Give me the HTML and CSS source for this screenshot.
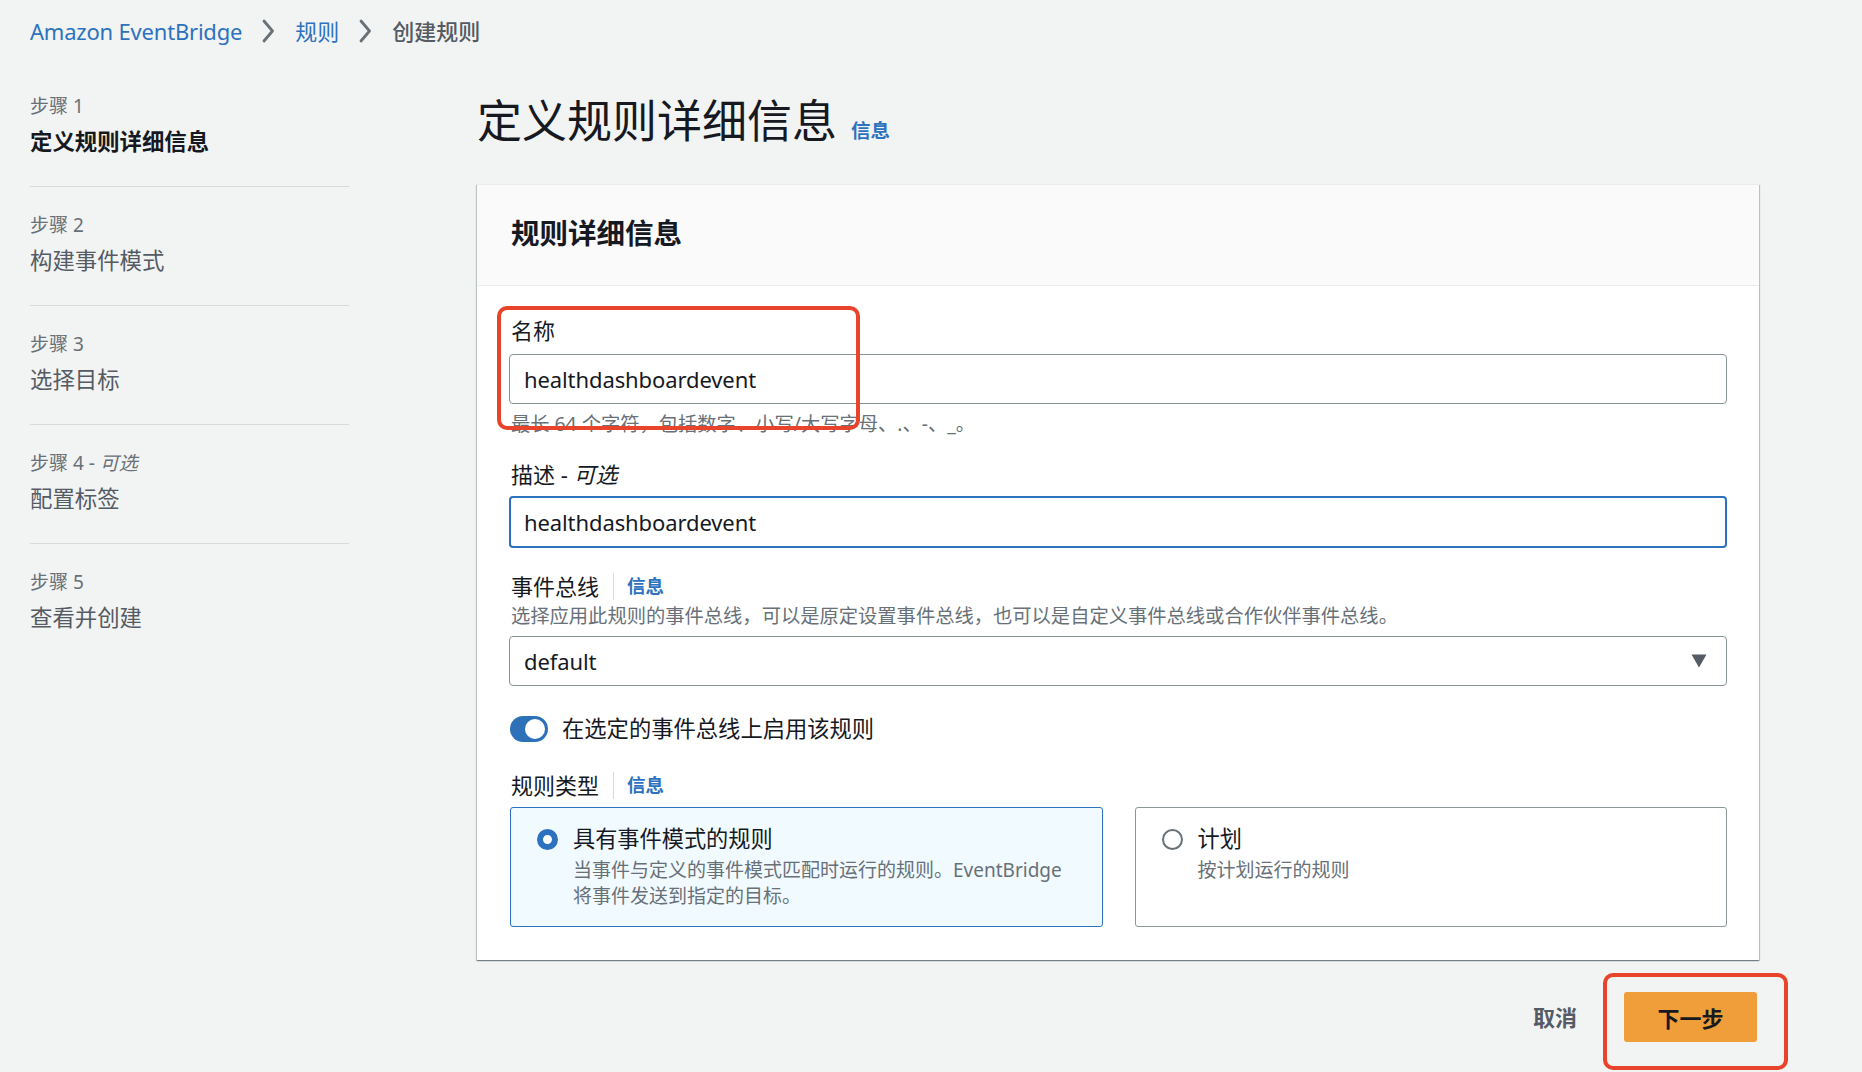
FILE: index.html
```html
<!DOCTYPE html>
<html lang="zh-CN">
<head>
<meta charset="utf-8">
<title>创建规则 - Amazon EventBridge</title>
<link rel="stylesheet" href="styles.css">
</head>
<body>
<nav class="crumbs">
  <a class="crumb-link">Amazon EventBridge</a>
  <svg class="chev" width="14" height="26" viewBox="0 0 14 26"><path d="M3 3l8.5 10L3 23" fill="none" stroke="#687078" stroke-width="2.8" stroke-linecap="round" stroke-linejoin="round"/></svg>
  <a class="crumb-link">规则</a>
  <svg class="chev" width="14" height="26" viewBox="0 0 14 26"><path d="M3 3l8.5 10L3 23" fill="none" stroke="#687078" stroke-width="2.8" stroke-linecap="round" stroke-linejoin="round"/></svg>
  <span class="crumb-current">创建规则</span>
</nav>

<div class="layout">
  <aside class="steps">
    <div class="step step-active">
      <div class="step-num">步骤 1</div>
      <div class="step-title">定义规则详细信息</div>
    </div>
    <div class="step">
      <div class="step-num">步骤 2</div>
      <div class="step-title">构建事件模式</div>
    </div>
    <div class="step">
      <div class="step-num">步骤 3</div>
      <div class="step-title">选择目标</div>
    </div>
    <div class="step">
      <div class="step-num">步骤 4 - <i>可选</i></div>
      <div class="step-title">配置标签</div>
    </div>
    <div class="step">
      <div class="step-num">步骤 5</div>
      <div class="step-title">查看并创建</div>
    </div>
  </aside>

  <main class="main">
    <header class="page-head">
      <h1 class="page-title">定义规则详细信息</h1>
      <a class="info info-head">信息</a>
    </header>

    <section class="card">
      <div class="card-head">
        <h2 class="card-title">规则详细信息</h2>
      </div>
      <div class="card-body">
        <div class="field field-name">
          <div class="label">名称</div>
          <div class="input">healthdashboardevent</div>
          <div class="hint">最长 64 个字符，包括数字、小写/大写字母、.、-、_。</div>
          <div class="annot annot-name"></div>
        </div>

        <div class="field field-desc">
          <div class="label">描述 - <i>可选</i></div>
          <div class="input input-focus">healthdashboardevent</div>
        </div>

        <div class="field field-bus">
          <div class="label label-info"><span class="label-text">事件总线</span><a class="info">信息</a></div>
          <div class="desc">选择应用此规则的事件总线，可以是原定设置事件总线，也可以是自定义事件总线或合作伙伴事件总线。</div>
          <div class="input select">
            <span>default</span>
            <svg class="caret" width="16" height="14" viewBox="0 0 16 14"><path d="M0.5 0.5h15L8 13.5z" fill="#545b64"/></svg>
          </div>
        </div>

        <div class="toggle-row">
          <span class="toggle"><span class="knob"></span></span>
          <span class="toggle-label">在选定的事件总线上启用该规则</span>
        </div>

        <div class="field field-type">
          <div class="label label-info"><span class="label-text">规则类型</span><a class="info">信息</a></div>
          <div class="tiles">
            <div class="tile tile-selected">
              <span class="radio radio-on"></span>
              <div class="tile-text">
                <div class="tile-title">具有事件模式的规则</div>
                <div class="tile-desc">当事件与定义的事件模式匹配时运行的规则。EventBridge<br>将事件发送到指定的目标。</div>
              </div>
            </div>
            <div class="tile">
              <span class="radio"></span>
              <div class="tile-text">
                <div class="tile-title">计划</div>
                <div class="tile-desc">按计划运行的规则</div>
              </div>
            </div>
          </div>
        </div>
      </div>
    </section>

    <footer class="actions">
      <a class="btn-link">取消</a>
      <div class="primary-wrap">
        <button class="btn-primary">下一步</button>
        <div class="annot annot-btn"></div>
      </div>
    </footer>
  </main>
</div>
</body>
</html>
```

FILE: styles.css
```css
* { box-sizing: border-box; }

html, body {
  margin: 0;
  padding: 0;
}

body {
  background: #f2f3f3;
  color: #16191f;
  font-family: "Noto Sans", "Noto Sans CJK SC", sans-serif;
  font-size: 22px;
  line-height: 32px;
  width: 1862px;
  height: 1072px;
  overflow: hidden;
}

a { text-decoration: none; cursor: pointer; }

/* breadcrumbs */
.crumbs {
  height: 62px;
  display: flex;
  align-items: center;
  padding-left: 30px;
  font-size: 22px;
}
.crumb-link { color: #2c72be; }
.crumb-link:first-child { letter-spacing: -0.2px; }
.crumb-current { color: #545b64; font-weight: 500; }
.chev { margin: 0 20px 0 19px; display: block; }

/* layout */
.layout {
  display: grid;
  grid-template-columns: 319px 1282px;
  column-gap: 128px;
  padding-left: 30px;
}

/* steps nav */
.steps {
  padding-top: 6px;
}
.step {
  padding: 25px 0 28px;
  border-bottom: 1px solid #d5dbdb;
}
.step:last-child { border-bottom: none; }
.step-num {
  font-size: 19px;
  line-height: 26px;
  color: #687078;
}
.step-title {
  margin-top: 7px;
  font-size: 22.4px;
  line-height: 32px;
  color: #545b64;
}
.step-active .step-title {
  color: #16191f;
  font-weight: 700;
}

/* main */
.page-head {
  display: flex;
  align-items: baseline;
  gap: 14px;
  margin-top: 31px;
  margin-bottom: 35px;
}
.page-title {
  margin: 0;
  font-size: 45px;
  line-height: 56px;
  font-weight: 400;
  color: #16191f;
}
.info {
  color: #2c72be;
  font-weight: 700;
  font-size: 18.5px;
}
.info-head { font-size: 19.5px; }

.card {
  background: #ffffff;
  border-top: 1px solid #eaeded;
  box-shadow: 0 1px 1px 0 rgba(0, 28, 36, 0.3), 1px 1px 1px 0 rgba(0, 28, 36, 0.18), -1px 1px 1px 0 rgba(0, 28, 36, 0.18);
}
.card-head {
  background: #fafafa;
  border-bottom: 1px solid #eaeded;
  padding: 30px 34px 34px;
}
.card-title {
  margin: 0;
  font-size: 28.5px;
  line-height: 36px;
  font-weight: 700;
}
.card-body {
  padding: 28px 32px 33px;
}

.field { position: relative; }
.label {
  font-size: 22px;
  line-height: 32px;
  padding-left: 2px;
  color: #16191f;
}
.input {
  margin-top: 8px;
  height: 50px;
  border: 1px solid #879596;
  border-radius: 4px;
  padding: 0 14px;
  display: flex;
  align-items: center;
  font-size: 22px;
  letter-spacing: -0.1px;
  background: #fff;
}
.input-focus {
  margin-top: 6px;
  height: 52px;
  border: 2px solid #2c72be;
  padding: 0 13px;
}
.hint {
  margin-top: 7px;
  font-size: 19.3px;
  line-height: 26px;
  color: #687078;
  padding-left: 2px;
}
.desc {
  margin-top: 1px;
  font-size: 19.3px;
  line-height: 26px;
  color: #687078;
  padding-left: 2px;
}
.field-desc { margin-top: 21px; }
.field-bus { margin-top: 22px; }
.select {
  margin-top: 7px;
  justify-content: space-between;
  padding-right: 19px;
}
.caret { display: block; }

.label-info {
  display: flex;
  align-items: center;
}
.label-text {
  padding-right: 14px;
  border-right: 1px solid #d5dbdb;
  line-height: 27px;
}
.label-info .info { padding-left: 13px; }

.toggle-row {
  margin-top: 27px;
  display: flex;
  align-items: center;
  gap: 14px;
  padding-left: 1px;
  line-height: 32px;
  font-size: 22.3px;
}
.toggle {
  width: 38px;
  height: 26px;
  border-radius: 13px;
  background: #2d72b8;
  display: flex;
  align-items: center;
  justify-content: flex-end;
  padding-right: 3px;
}
.knob {
  width: 20px;
  height: 20px;
  border-radius: 50%;
  background: #ffffff;
}

.field-type { margin-top: 24px; }
.tiles {
  margin-top: 6px;
  display: grid;
  grid-template-columns: 1fr 1fr;
  column-gap: 32px;
  padding-left: 1px;
}
.tile {
  height: 120px;
  border: 1px solid #8d9799;
  border-radius: 3px;
  background: #fff;
  display: flex;
  gap: 15px;
  padding: 15px 20px 0 26px;
}
.tile-selected {
  background: #f1faff;
  border-color: #2c72be;
}
.radio {
  flex: none;
  width: 21px;
  height: 21px;
  margin-top: 6px;
  border-radius: 50%;
  border: 2px solid #687078;
  background: #fff;
}
.radio-on {
  border: 6px solid #2c72be;
}
.tile-title {
  font-size: 22.2px;
  line-height: 32px;
}
.tile-desc {
  margin-top: 2px;
  font-size: 19px;
  line-height: 26px;
  color: #687078;
}

/* footer actions */
.actions {
  margin-top: 32px;
  display: flex;
  justify-content: flex-end;
  align-items: center;
  gap: 47px;
  padding-right: 2px;
}
.btn-link {
  color: #545b64;
  font-weight: 700;
  font-size: 22px;
}
.primary-wrap { position: relative; }
.btn-primary {
  display: block;
  width: 133px;
  height: 50px;
  border: none;
  border-radius: 3px;
  background: #f09e3a;
  color: #16191f;
  font-family: "Noto Sans", "Noto Sans CJK SC", sans-serif;
  font-size: 22px;
  font-weight: 700;
  padding: 0;
}

/* red annotation frames drawn over the screenshot */
.annot {
  position: absolute;
  border: 4px solid #e8432b;
  border-radius: 10px;
  pointer-events: none;
}
.annot-name {
  left: -12px;
  top: -8px;
  width: 363px;
  height: 124px;
}
.annot-btn {
  left: -21px;
  top: -19px;
  width: 185px;
  height: 97px;
}
```
